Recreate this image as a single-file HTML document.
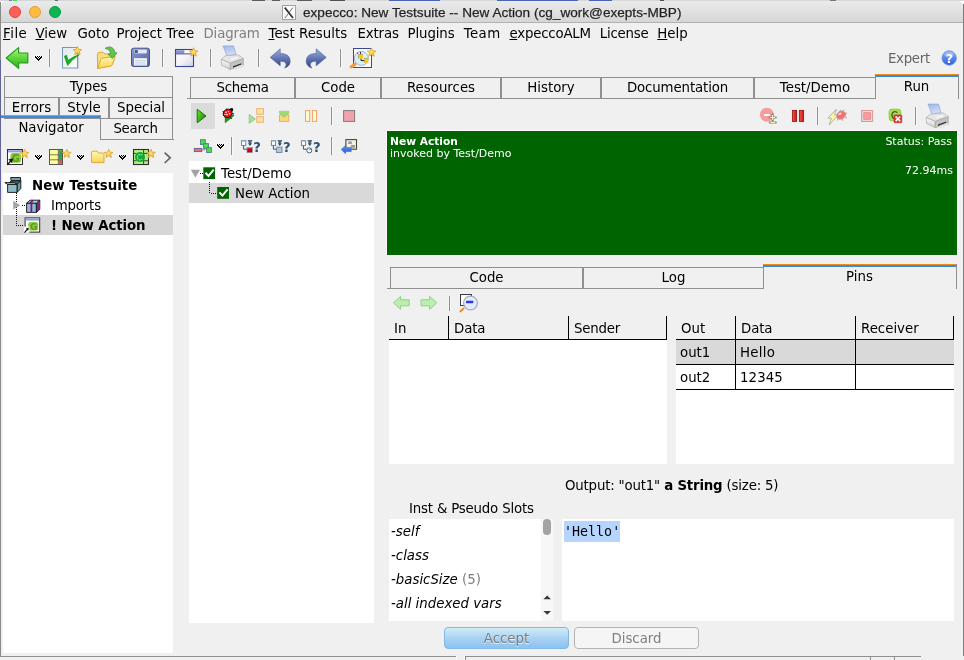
<!DOCTYPE html>
<html><head><meta charset="utf-8"><title>expecco</title>
<style>
*{box-sizing:border-box;margin:0;padding:0}
html,body{width:964px;height:660px;overflow:hidden;background:#fff}
body{font-family:"DejaVu Sans","Liberation Sans",sans-serif;font-size:13.33px;color:#000;position:relative}

#bgwin{position:absolute;left:1px;top:1px;width:962px;height:655px;background:#f0f0f0;border-radius:5px 5px 0 0}
#title{position:absolute;left:1px;top:1px;width:962px;height:22px;background:linear-gradient(#ebebeb,#d6d6d6);border-bottom:1px solid #b1b1b1;border-radius:5px 5px 0 0}
.tl{position:absolute;top:5px;width:12px;height:12px;border-radius:50%}
.mi{letter-spacing:0;position:absolute;top:25px;height:18px;line-height:18px;white-space:pre}
.mi u{text-decoration:underline;text-underline-offset:0.5px;text-decoration-thickness:1px}
.tab{position:absolute;border:1px solid #8f8f8f;background:#f0f0f0;text-align:center;white-space:pre;overflow:hidden}
.tab.sel{border:none;border-right:1px solid #8f8f8f;background:transparent}
.tab.sel:before{content:"";position:absolute;left:0;right:-1px;top:0;height:3px;background:linear-gradient(#f28a22 0,#f28a22 1px,#3a8ae0 1px,#3a8ae0 3px)}
.hl{position:absolute;height:1px;background:#9a9a9a}
.vl{position:absolute;width:1px;background:#8e8e8e;box-shadow:1px 0 0 #f9f9f9,-1px 0 0 #f5f5f5}
.bl{position:absolute;background:#000}
.white{position:absolute;background:#fff}
.t{position:absolute;white-space:pre;line-height:16px;height:16px}
.ic{position:absolute;overflow:visible}
#root{position:absolute;left:0;top:0;width:964px;height:660px;will-change:transform;overflow:hidden}
</style></head><body>
<div id="root">
<!-- desktop fragments -->
<div style="position:absolute;left:0px;top:0px;width:964px;height:1px;background:#d3d7da;"></div>
<div style="position:absolute;left:9px;top:0px;width:3px;height:1px;background:#5a5ab0;opacity:.75"></div>
<div style="position:absolute;left:13px;top:0px;width:4px;height:1px;background:#22dd22;opacity:.75"></div>
<div style="position:absolute;left:55px;top:0px;width:3px;height:1px;background:#444;opacity:.75"></div>
<div style="position:absolute;left:252px;top:0px;width:13px;height:1px;background:#333;opacity:.75"></div>
<div style="position:absolute;left:272px;top:0px;width:8px;height:1px;background:#333;opacity:.75"></div>
<div style="position:absolute;left:297px;top:0px;width:15px;height:1px;background:#333;opacity:.75"></div>
<div style="position:absolute;left:330px;top:0px;width:15px;height:1px;background:#222;opacity:.75"></div>
<div style="position:absolute;left:389px;top:0px;width:51px;height:1px;background:#1c3fa5;opacity:.75"></div>
<div style="position:absolute;left:497px;top:0px;width:81px;height:1px;background:#1c3fa5;opacity:.75"></div>
<div style="position:absolute;left:589px;top:0px;width:23px;height:1px;background:#1c3fa5;opacity:.75"></div>
<div style="position:absolute;left:660px;top:0px;width:4px;height:1px;background:#222;opacity:.75"></div>
<div style="position:absolute;left:830px;top:0px;width:6px;height:1px;background:#555;opacity:.75"></div>
<div style="position:absolute;left:0px;top:2px;width:1px;height:658px;background:#8a8a8a;"></div>
<div style="position:absolute;left:963px;top:4px;width:1px;height:653px;background:#7c7c7c;"></div>
<div style="position:absolute;left:0px;top:60px;width:1px;height:140px;background:#3a3ab0;opacity:.5"></div>
<div style="position:absolute;left:0px;top:656px;width:964px;height:4px;background:#f0f0f0;"></div>
<div style="position:absolute;left:0px;top:656px;width:456px;height:1px;background:#8f8f8f;"></div>
<div style="position:absolute;left:456px;top:656px;width:1px;height:4px;background:#fafafa;"></div>
<div style="position:absolute;left:464px;top:656px;width:1px;height:4px;background:#fafafa;"></div>
<div style="position:absolute;left:465px;top:656px;width:456px;height:1px;background:#8f8f8f;"></div>
<div style="position:absolute;left:465px;top:656px;width:1px;height:4px;background:#8f8f8f;"></div>
<div style="position:absolute;left:870px;top:656px;width:1px;height:4px;background:#8f8f8f;"></div>
<div style="position:absolute;left:894px;top:656px;width:1px;height:4px;background:#8f8f8f;"></div>
<div id="bgwin"></div>
<div id="title">
 <div class="tl" style="left:8px;background:#fc5f57;border:0.5px solid #e0443e"></div>
 <div class="tl" style="left:28px;background:#fdbc40;border:0.5px solid #dea034"></div>
 <div class="tl" style="left:48px;background:#0bb552;border:0.5px solid #0a9d44"></div>
</div>
<svg class="ic" style="left:282px;top:5px" width="15" height="15" viewBox="0 0 15 15"><rect x="0.5" y="0.5" width="13" height="14" fill="#fbfbfb" stroke="#a2a2a2"/><path d="M2.8 2.6L11 13" stroke="#333" stroke-width="1.7"/><path d="M10.8 2.6L3 13" stroke="#444" stroke-width="0.8"/></svg>
<div class="t" style="left:303px;top:5px;font-family:'Liberation Sans',sans-serif;font-size:13.6px;letter-spacing:0;color:#1e1e1e;-webkit-text-stroke:0.25px #2a2a2a">expecco: New Testsuite -- New Action (cg_work@exepts-MBP)</div>
<!-- menu -->
<span class="mi" style="left:3px;letter-spacing:0.5px"><u>F</u>ile</span>
<span class="mi" style="left:35.5px;"><u>V</u>iew</span>
<span class="mi" style="left:77.5px;">Goto</span>
<span class="mi" style="left:116.5px;">Project Tree</span>
<span class="mi" style="left:203.5px;color:#7f7f7f;letter-spacing:-0.15px">Diagram</span>
<span class="mi" style="left:268.5px;"><u>T</u>est Results</span>
<span class="mi" style="left:357.5px;letter-spacing:-0.15px">Extras</span>
<span class="mi" style="left:407.5px;letter-spacing:-0.1px">Plugins</span>
<span class="mi" style="left:463.7px;letter-spacing:0.4px">Team</span>
<span class="mi" style="left:509.5px;letter-spacing:-0.2px"><u>e</u>xpeccoALM</span>
<span class="mi" style="left:599.7px;letter-spacing:-0.22px">License</span>
<span class="mi" style="left:657.3px;"><u>H</u>elp</span>
<!--TOOLBAR-->
<div class="vl" style="left:49px;top:49px;height:18px"></div>
<div class="vl" style="left:162px;top:49px;height:18px"></div>
<div class="vl" style="left:210px;top:49px;height:18px"></div>
<div class="vl" style="left:258px;top:49px;height:18px"></div>
<div class="vl" style="left:340px;top:49px;height:18px"></div>
<div class="t" style="left:888px;top:51px;color:#666;letter-spacing:-0.3px">Expert</div>
<!-- left tabs -->
<div class="tab" style="left:4px;top:76px;width:169px;height:22px;line-height:20px;">Types</div>
<div class="tab" style="left:4px;top:97px;width:55px;height:22px;line-height:20px;">Errors</div>
<div class="tab" style="left:59px;top:97px;width:50px;height:22px;line-height:20px;">Style</div>
<div class="tab" style="left:109px;top:97px;width:64px;height:22px;line-height:20px;">Special</div>
<div class="tab" style="left:100px;top:118px;width:73px;height:22px;line-height:19px;padding-right:2px;letter-spacing:-0.26px">Search</div>
<div class="hl" style="left:172px;top:139px;width:2px;background:#8f8f8f"></div>
<div class="tab sel" style="left:1px;top:115px;width:100px;height:25px;line-height:26px;padding-left:1px">Navigator</div>
<div class="white" style="left:3px;top:173px;width:170px;height:480px"></div>
<div style="position:absolute;left:3px;top:215px;width:170px;height:20px;background:#d6d6d6;"></div>
<div class="t" style="left:32px;top:178px;font-weight:bold;letter-spacing:0">New Testsuite</div>
<div class="t" style="left:51px;top:198px;letter-spacing:-0.18px">Imports</div>
<div class="t" style="left:51px;top:218px;font-weight:bold;letter-spacing:-0.1px">! New Action</div>
<!-- main tabs -->
<div class="hl" style="left:187px;top:98px;width:4px;background:#8f8f8f"></div>
<div class="tab" style="left:190px;top:77px;width:105px;height:22px;line-height:20px;letter-spacing:-0.24px">Schema</div>
<div class="tab" style="left:295px;top:77px;width:86px;height:22px;line-height:20px;letter-spacing:0px">Code</div>
<div class="tab" style="left:381px;top:77px;width:120px;height:22px;line-height:20px;letter-spacing:0px">Resources</div>
<div class="tab" style="left:501px;top:77px;width:100px;height:22px;line-height:20px;letter-spacing:0px">History</div>
<div class="tab" style="left:601px;top:77px;width:153px;height:22px;line-height:20px;letter-spacing:-0.12px">Documentation</div>
<div class="tab" style="left:754px;top:77px;width:122px;height:22px;line-height:20px;letter-spacing:0px">Test/Demo</div>
<div class="tab sel" style="left:875px;top:74px;width:84px;height:25px;line-height:26px;">Run</div>
<div style="position:absolute;left:191px;top:103px;width:24px;height:26px;background:#dbdbdb;"></div>
<div class="vl" style="left:331px;top:107px;height:18px"></div>
<div class="vl" style="left:817px;top:107px;height:18px"></div>
<div class="vl" style="left:915px;top:107px;height:18px"></div>
<div class="vl" style="left:231px;top:137px;height:18px"></div>
<div class="vl" style="left:331px;top:137px;height:18px"></div>
<div class="white" style="left:189px;top:161px;width:185px;height:462px"></div>
<div style="position:absolute;left:189px;top:183px;width:185px;height:20px;background:#d9d9d9;"></div>
<div class="t" style="left:221px;top:166px;">Test/Demo</div>
<div class="t" style="left:235px;top:186px;">New Action</div>
<div style="position:absolute;left:386px;top:130px;width:572px;height:126px;background:#fdfafd;"></div>
<div style="position:absolute;left:387px;top:131px;width:570px;height:124px;background:#006400;"></div>
<div class="t" style="left:390px;top:135px;color:#fff;font-weight:bold;font-size:10.67px;line-height:13px;letter-spacing:0">New Action</div>
<div class="t" style="left:390px;top:147px;color:#fff;font-size:11px;line-height:13px;letter-spacing:0">invoked by Test/Demo</div>
<div class="t" style="right:12px;left:auto;top:135px;color:#fff;font-size:11px;line-height:13px;letter-spacing:0">Status: Pass</div>
<div class="t" style="right:11px;left:auto;top:164px;color:#fff;font-size:11px;line-height:13px;letter-spacing:0">72.94ms</div>
<div class="hl" style="left:387px;top:288px;width:4px;background:#8f8f8f"></div>
<div class="tab" style="left:390px;top:267px;width:193px;height:22px;line-height:20px;">Code</div>
<div class="tab" style="left:583px;top:267px;width:181px;height:22px;line-height:20px;">Log</div>
<div class="tab sel" style="left:763px;top:264px;width:194px;height:25px;line-height:26px;">Pins</div>
<div class="vl" style="left:449px;top:296px;height:15px"></div>
<div style="position:absolute;left:389px;top:340px;width:278px;height:124px;background:#fff;"></div>
<div style="position:absolute;left:389px;top:339px;width:278px;height:1px;background:#000;"></div>
<div style="position:absolute;left:448px;top:316px;width:1px;height:24px;background:#000;"></div>
<div style="position:absolute;left:568px;top:316px;width:1px;height:24px;background:#000;"></div>
<div style="position:absolute;left:666px;top:316px;width:1px;height:24px;background:#000;"></div>
<div class="t" style="left:394px;top:321px;">In</div>
<div class="t" style="left:454px;top:321px;letter-spacing:-0.13px">Data</div>
<div class="t" style="left:574px;top:321px;letter-spacing:-0.18px">Sender</div>
<div style="position:absolute;left:676px;top:340px;width:278px;height:124px;background:#fff;"></div>
<div style="position:absolute;left:676px;top:340px;width:278px;height:24px;background:#d9d9d9;"></div>
<div style="position:absolute;left:676px;top:339px;width:278px;height:1px;background:#000;"></div>
<div style="position:absolute;left:676px;top:364px;width:278px;height:1px;background:#000;"></div>
<div style="position:absolute;left:676px;top:389px;width:278px;height:1px;background:#000;"></div>
<div style="position:absolute;left:735px;top:316px;width:1px;height:74px;background:#000;"></div>
<div style="position:absolute;left:855px;top:316px;width:1px;height:74px;background:#000;"></div>
<div style="position:absolute;left:953px;top:316px;width:1px;height:24px;background:#000;"></div>
<div class="t" style="left:681px;top:321px;">Out</div>
<div class="t" style="left:741px;top:321px;letter-spacing:-0.13px">Data</div>
<div class="t" style="left:861px;top:321px;">Receiver</div>
<div class="t" style="left:680px;top:345px;">out1</div>
<div class="t" style="left:740px;top:345px;letter-spacing:0.3px">Hello</div>
<div class="t" style="left:680px;top:370px;">out2</div>
<div class="t" style="left:740px;top:370px;letter-spacing:0.1px">12345</div>
<div class="t" style="left:565px;top:478px;letter-spacing:-0.18px">Output: "out1" <b>a String</b> (size: 5)</div>
<div class="t" style="left:409px;top:501px;letter-spacing:-0.18px">Inst &amp; Pseudo Slots</div>
<div style="position:absolute;left:389px;top:519px;width:164px;height:102px;background:#fff;"></div>
<div style="position:absolute;left:541px;top:519px;width:12px;height:102px;background:#f7f7f7;"></div>
<div style="position:absolute;left:543px;top:519px;width:8px;height:16px;background:#a3a3a3;border-radius:4px"></div>
<div class="t" style="left:391px;top:524px;font-style:italic">-self</div>
<div class="t" style="left:391px;top:548px;font-style:italic">-class</div>
<div class="t" style="left:391px;top:572px;font-style:italic">-basicSize <span style="font-style:normal;color:#808080">(5)</span></div>
<div class="t" style="left:391px;top:596px;font-style:italic">-all indexed vars</div>
<svg class="ic" style="left:0;top:0" width="964" height="660" viewBox="0 0 964 660"><path d="M543.4 599.2L547.2 595.4L551 599.2z" fill="#3a3a3a"/><path d="M543.4 610.9L547.2 614.7L551 610.9z" fill="#3a3a3a"/></svg>
<div style="position:absolute;left:562px;top:519px;width:392px;height:102px;background:#fff;"></div>
<div style="position:absolute;left:564px;top:521px;width:56px;height:21px;background:#b5d5ff;"></div>
<div class="t" style="left:564px;top:524px;font-family:'DejaVu Sans Mono',monospace;letter-spacing:0">'Hello'</div>
<div style="position:absolute;left:444px;top:627px;width:125px;height:22px;border:1px solid #84b8e4;border-radius:4px;background:linear-gradient(#d2ecf6,#a9d3f3 50%,#8bc2ef);text-align:center;line-height:21px;color:#7d7d7d;text-shadow:0 1px 0 #e8f3fc">Accept</div>
<div style="position:absolute;left:574px;top:627px;width:125px;height:22px;border:1px solid #b3b3b3;border-radius:4px;background:#f5f5f5;text-align:center;line-height:21px;color:#808080">Discard</div>
<!--ICONS-->
<svg class="ic" style="left:0;top:0" width="964" height="660" viewBox="0 0 964 660">
<defs>
<linearGradient id="gStar" x1="0" y1="0" x2="0.6" y2="1"><stop offset="0" stop-color="#fff6b8"/><stop offset="1" stop-color="#f3c334"/></linearGradient>
<linearGradient id="gArrowG" x1="0" y1="0" x2="0" y2="1"><stop offset="0" stop-color="#b4f58c"/><stop offset="0.5" stop-color="#5fd63a"/><stop offset="1" stop-color="#2fae1c"/></linearGradient>
<linearGradient id="gPlay" x1="0" y1="0.1" x2="1" y2="0.8"><stop offset="0" stop-color="#5cf210"/><stop offset="0.5" stop-color="#3fae1c"/><stop offset="1" stop-color="#2a7e1c"/></linearGradient>
<linearGradient id="gBlueArr" x1="0" y1="0" x2="0" y2="1"><stop offset="0" stop-color="#9fb0dc"/><stop offset="0.55" stop-color="#5c70ae"/><stop offset="1" stop-color="#2f3f7e"/></linearGradient>
<linearGradient id="gFolder" x1="0" y1="0" x2="0" y2="1"><stop offset="0" stop-color="#fff6b4"/><stop offset="1" stop-color="#f9d654"/></linearGradient>
<linearGradient id="gFloppy" x1="0" y1="0" x2="1" y2="1"><stop offset="0" stop-color="#8d9cd0"/><stop offset="1" stop-color="#51639f"/></linearGradient>
<linearGradient id="gPage" x1="0" y1="0" x2="1" y2="1"><stop offset="0" stop-color="#dfe6f0"/><stop offset="1" stop-color="#fdfdfd"/></linearGradient>
<linearGradient id="gWinB" x1="0" y1="0" x2="1" y2="1"><stop offset="0" stop-color="#fffdfd"/><stop offset="0.5" stop-color="#f8f3f5"/><stop offset="1" stop-color="#cfd0e4"/></linearGradient>
<linearGradient id="gPaper" x1="0" y1="0" x2="0.3" y2="1"><stop offset="0" stop-color="#9db6ea"/><stop offset="1" stop-color="#d4def4"/></linearGradient>
<linearGradient id="gPrnL" x1="0" y1="0" x2="0" y2="1"><stop offset="0" stop-color="#fafafa"/><stop offset="1" stop-color="#cfcfcf"/></linearGradient>
<linearGradient id="gHelp" x1="0" y1="0" x2="0" y2="1"><stop offset="0" stop-color="#7fa8f8"/><stop offset="1" stop-color="#2f62d8"/></linearGradient>
<linearGradient id="gRedBar" x1="0" y1="0" x2="1" y2="0"><stop offset="0" stop-color="#f05a4a"/><stop offset="1" stop-color="#c41414"/></linearGradient>
<linearGradient id="gBlueL" x1="0" y1="0" x2="0" y2="1"><stop offset="0" stop-color="#6aa0f4"/><stop offset="1" stop-color="#1c50c8"/></linearGradient>
</defs>
<!-- back arrow -->
<path d="M6.2 58L18.6 47.6L18.6 53L27.8 53L27.8 62.8L18.6 62.8L18.6 68.4z" fill="url(#gArrowG)" stroke="#1ea01a" stroke-width="1.2" stroke-linejoin="round"/>
<g shape-rendering="crispEdges"><rect x="35" y="55" width="1" height="1" fill="#fff" opacity="0.8"/><rect x="37" y="55" width="1" height="1" fill="#fff" opacity="0.8"/><rect x="39" y="55" width="1" height="1" fill="#fff" opacity="0.8"/><rect x="41" y="55" width="1" height="1" fill="#fff" opacity="0.8"/><rect x="34" y="56" width="1" height="1" fill="#fff" opacity="0.8"/><rect x="42" y="56" width="1" height="1" fill="#fff" opacity="0.8"/><rect x="34" y="57" width="1" height="1" fill="#fff" opacity="0.8"/><rect x="42" y="57" width="1" height="1" fill="#fff" opacity="0.8"/><rect x="35" y="58" width="1" height="1" fill="#fff" opacity="0.8"/><rect x="41" y="58" width="1" height="1" fill="#fff" opacity="0.8"/><rect x="36" y="59" width="1" height="1" fill="#fff" opacity="0.8"/><rect x="40" y="59" width="1" height="1" fill="#fff" opacity="0.8"/><rect x="37" y="60" width="1" height="1" fill="#fff" opacity="0.8"/><rect x="39" y="60" width="1" height="1" fill="#fff" opacity="0.8"/><rect x="38" y="61" width="1" height="1" fill="#fff" opacity="0.8"/><rect x="35" y="56" width="1" height="1" fill="#000"/><rect x="37" y="56" width="1" height="1" fill="#000"/><rect x="39" y="56" width="1" height="1" fill="#000"/><rect x="41" y="56" width="1" height="1" fill="#000"/><rect x="35" y="57" width="1" height="1" fill="#000"/><rect x="36" y="57" width="1" height="1" fill="#000"/><rect x="38" y="57" width="1" height="1" fill="#000"/><rect x="40" y="57" width="1" height="1" fill="#000"/><rect x="41" y="57" width="1" height="1" fill="#000"/><rect x="36" y="58" width="1" height="1" fill="#000"/><rect x="37" y="58" width="1" height="1" fill="#000"/><rect x="39" y="58" width="1" height="1" fill="#000"/><rect x="40" y="58" width="1" height="1" fill="#000"/><rect x="37" y="59" width="1" height="1" fill="#000"/><rect x="38" y="59" width="1" height="1" fill="#000"/><rect x="39" y="59" width="1" height="1" fill="#000"/><rect x="38" y="60" width="1" height="1" fill="#000"/></g>
<!-- check doc -->
<rect x="62.5" y="47.5" width="15" height="20.5" fill="url(#gPage)" stroke="#7a98b6" stroke-width="1"/>
<path d="M63.4 68.6h15.2v-19" fill="none" stroke="#b9c6d4" stroke-width="0.8"/>
<path d="M64.4 56.2L66.6 55.2L68 60.6Q72 57 79.4 54.6Q72 59.4 67.6 65.4z" fill="#18b01c" stroke="#0d9a12" stroke-width="0.7" stroke-linejoin="round"/>
<polygon points="77.40,46.40 78.58,49.38 81.77,49.58 79.30,51.62 80.10,54.72 77.40,53.00 74.70,54.72 75.50,51.62 73.03,49.58 76.22,49.38" fill="url(#gStar)" stroke="#dca92c" stroke-width="0.9" stroke-linejoin="round"/>
<!-- folder open -->
<path d="M97.6 68.4L97.4 54.4Q97.4 52.6 99 52.4L103.4 52.2L105 54L112.6 54Q113.8 54 113.8 55.2L113.8 57L115 57L112.4 64.6Q111.8 65.8 110.4 66z" fill="#f7dc80" stroke="#dfa428" stroke-width="0.9" stroke-linejoin="round"/>
<path d="M97.8 68.4L100.6 59.6Q101 58.4 102.2 58.2L115.2 56.4L112.2 64.8Q111.8 65.8 110.4 66z" fill="url(#gFolder)" stroke="#dfa428" stroke-width="0.9" stroke-linejoin="round"/>
<path d="M105 48.3Q110.6 45.4 113.4 48.8Q114.6 50.4 114.7 52.7L117 52.9L112.3 58.5L107.9 54L110.6 53.5Q110.4 51.6 109.2 50.4Q107.6 48.9 105 48.3z" fill="#62c44c" stroke="#3f9c34" stroke-width="0.8" stroke-linejoin="round"/>
<!-- floppy -->
<rect x="131.5" y="48.2" width="18" height="18.3" rx="2" fill="url(#gFloppy)" stroke="#46568e" stroke-width="1"/>
<rect x="134.6" y="49.6" width="12.2" height="3.8" fill="#e4e8f4"/>
<rect x="135" y="50" width="2.8" height="3" fill="#4a5a94"/>
<rect x="134" y="58.2" width="13" height="7.4" fill="#f7f8fc"/>
<path d="M135 60.4h11M135 62.2h11M135 64h11" stroke="#bcc4de" stroke-width="0.8"/>
<!-- new window -->
<rect x="175.5" y="49.5" width="18" height="17" fill="url(#gWinB)" stroke="#36469a" stroke-width="1.1"/>
<rect x="175.9" y="50.2" width="8.4" height="3.4" fill="#8696c8"/>
<path d="M175.4 53.9h18.2" stroke="#36469a" stroke-width="0.9"/>
<polygon points="193.60,47.80 194.78,50.78 197.97,50.98 195.50,53.02 196.30,56.12 193.60,54.40 190.90,56.12 191.70,53.02 189.23,50.98 192.42,50.78" fill="url(#gStar)" stroke="#dca92c" stroke-width="0.9" stroke-linejoin="round"/>
<g transform="translate(221,46)"><path d="M2 -0.1L12.6 -0.1L15 8.6L6 9.7z" fill="url(#gPaper)" stroke="#90a6dc" stroke-width="0.7" stroke-linejoin="round"/><path d="M0.2 13.4L4.2 9.8L17.4 8.8L22.3 12.5L9.4 17.2z" fill="#e6e6e6" stroke="#a4a4a4" stroke-width="0.6" stroke-linejoin="round"/><path d="M7.6 12.6L16.4 10.4L19.4 12L10.4 14.8z" fill="#f6f6f6" stroke="#cfcfcf" stroke-width="0.4"/><path d="M0.2 13.4L9.4 17.2L9.2 23.5L0.6 19.2z" fill="url(#gPrnL)" stroke="#9a9a9a" stroke-width="0.6" stroke-linejoin="round"/><path d="M9.4 17.2L22.3 12.5L22.4 19L9.2 23.5z" fill="#c4c4c4" stroke="#9a9a9a" stroke-width="0.6" stroke-linejoin="round"/><path d="M12 20.2L20.4 17.2L20.4 18.6L12 21.8z" fill="#2e2e2e"/><path d="M12.6 22L21 18.8L23 19.8L14.4 23.4z" fill="#ececec" stroke="#b4b4b4" stroke-width="0.3"/></g>
<!-- undo / redo -->
<path d="M270.2 57.4L280.2 48.8L280.2 53.4Q290.4 53.6 290.2 61.4Q290 66.2 284.6 68Q287.2 65 285.6 62.8Q284 60.8 280.2 61.2L280.2 65.8z" fill="url(#gBlueArr)" stroke="#4a5c9e" stroke-width="0.6" stroke-linejoin="round"/>
<g transform="translate(596.4,0) scale(-1,1)"><path d="M270.2 57.4L280.2 48.8L280.2 53.4Q290.4 53.6 290.2 61.4Q290 66.2 284.6 68Q287.2 65 285.6 62.8Q284 60.8 280.2 61.2L280.2 65.8z" fill="url(#gBlueArr)" stroke="#4a5c9e" stroke-width="0.6" stroke-linejoin="round"/></g>
<!-- magnifier -->
<rect x="353.5" y="48.5" width="18" height="19" fill="#fcf9fb" stroke="#3a4a92" stroke-width="1"/>
<path d="M355.2 64.2L351 67" stroke="#f59a3c" stroke-width="3" stroke-linecap="round"/>
<circle cx="361.4" cy="58.4" r="7" fill="#d6f1fc" stroke="#a6acd8" stroke-width="1"/>
<path d="M361 58.4v2.2h3.4" fill="none" stroke="#222" stroke-width="1"/>
<path d="M360.5 52v2.4" stroke="#222" stroke-width="0.9"/><rect x="357" y="52.6" width="1" height="1" fill="#222"/>
<rect x="358.4" y="54.4" width="4.5" height="4.2" fill="#ffc800"/><path d="M358.4 58.6v-4.2h4.5" fill="none" stroke="#8a8a7a" stroke-width="0.6"/>
<rect x="364.3" y="58.4" width="4" height="4.4" fill="#ffc800"/><path d="M364.3 62.8v-4.4h4" fill="none" stroke="#8a8a7a" stroke-width="0.6"/>
<polygon points="371.50,47.90 372.68,50.88 375.87,51.08 373.40,53.12 374.20,56.22 371.50,54.50 368.80,56.22 369.60,53.12 367.13,51.08 370.32,50.88" fill="url(#gStar)" stroke="#dca92c" stroke-width="0.9" stroke-linejoin="round"/>
<!-- help -->
<circle cx="949.2" cy="58" r="7.2" fill="url(#gHelp)" stroke="#5a86e6" stroke-width="0.7"/>
<ellipse cx="949.2" cy="54.6" rx="5" ry="3" fill="#fff" opacity="0.28"/>
<text x="949.3" y="62.6" text-anchor="middle" font-family="DejaVu Sans, sans-serif" font-weight="bold" font-size="12.5" fill="#fff">?</text>
<!-- left toolbar -->
<rect x="7.5" y="149.5" width="15" height="15" fill="#fff" stroke="#2e2e2e" stroke-width="1"/>
<rect x="8" y="150.2" width="14" height="2.2" fill="#8ea4d6"/>
<rect x="10.4" y="153" width="10.6" height="9.8" rx="2.4" fill="#8fca3c"/>
<text x="15.8" y="161.6" text-anchor="middle" font-family="DejaVu Sans, sans-serif" font-weight="bold" font-size="9.6" fill="#5c9a1e">G</text>
<path d="M7.2 164.8L11.6 160.2" stroke="#111" stroke-width="1.3"/><path d="M12.6 158.8L8.8 159.6L11.8 162.6z" fill="#111" stroke="#111" stroke-width="0.6"/>
<polygon points="24.60,149.20 25.78,152.18 28.97,152.38 26.50,154.42 27.30,157.52 24.60,155.80 21.90,157.52 22.70,154.42 20.23,152.38 23.42,152.18" fill="url(#gStar)" stroke="#dca92c" stroke-width="0.9" stroke-linejoin="round"/>
<g shape-rendering="crispEdges"><rect x="35" y="154" width="1" height="1" fill="#fff" opacity="0.8"/><rect x="37" y="154" width="1" height="1" fill="#fff" opacity="0.8"/><rect x="39" y="154" width="1" height="1" fill="#fff" opacity="0.8"/><rect x="41" y="154" width="1" height="1" fill="#fff" opacity="0.8"/><rect x="34" y="155" width="1" height="1" fill="#fff" opacity="0.8"/><rect x="42" y="155" width="1" height="1" fill="#fff" opacity="0.8"/><rect x="34" y="156" width="1" height="1" fill="#fff" opacity="0.8"/><rect x="42" y="156" width="1" height="1" fill="#fff" opacity="0.8"/><rect x="35" y="157" width="1" height="1" fill="#fff" opacity="0.8"/><rect x="41" y="157" width="1" height="1" fill="#fff" opacity="0.8"/><rect x="36" y="158" width="1" height="1" fill="#fff" opacity="0.8"/><rect x="40" y="158" width="1" height="1" fill="#fff" opacity="0.8"/><rect x="37" y="159" width="1" height="1" fill="#fff" opacity="0.8"/><rect x="39" y="159" width="1" height="1" fill="#fff" opacity="0.8"/><rect x="38" y="160" width="1" height="1" fill="#fff" opacity="0.8"/><rect x="35" y="155" width="1" height="1" fill="#000"/><rect x="37" y="155" width="1" height="1" fill="#000"/><rect x="39" y="155" width="1" height="1" fill="#000"/><rect x="41" y="155" width="1" height="1" fill="#000"/><rect x="35" y="156" width="1" height="1" fill="#000"/><rect x="36" y="156" width="1" height="1" fill="#000"/><rect x="38" y="156" width="1" height="1" fill="#000"/><rect x="40" y="156" width="1" height="1" fill="#000"/><rect x="41" y="156" width="1" height="1" fill="#000"/><rect x="36" y="157" width="1" height="1" fill="#000"/><rect x="37" y="157" width="1" height="1" fill="#000"/><rect x="39" y="157" width="1" height="1" fill="#000"/><rect x="40" y="157" width="1" height="1" fill="#000"/><rect x="37" y="158" width="1" height="1" fill="#000"/><rect x="38" y="158" width="1" height="1" fill="#000"/><rect x="39" y="158" width="1" height="1" fill="#000"/><rect x="38" y="159" width="1" height="1" fill="#000"/></g>
<rect x="49.5" y="149.5" width="13" height="15" fill="#ffff99" stroke="#555" stroke-width="1"/>
<rect x="58.6" y="150.2" width="3.4" height="4.4" fill="#1cb04a"/><rect x="58.6" y="155" width="3.4" height="4.6" fill="#1cb04a"/><rect x="58.6" y="160" width="3.4" height="4.2" fill="#f25252"/>
<path d="M49.5 154.8h13M49.5 159.8h13M58.3 149.7v15" stroke="#555" stroke-width="0.8"/>
<polygon points="66.80,149.20 67.98,152.18 71.17,152.38 68.70,154.42 69.50,157.52 66.80,155.80 64.10,157.52 64.90,154.42 62.43,152.38 65.62,152.18" fill="url(#gStar)" stroke="#dca92c" stroke-width="0.9" stroke-linejoin="round"/>
<g shape-rendering="crispEdges"><rect x="77" y="154" width="1" height="1" fill="#fff" opacity="0.8"/><rect x="79" y="154" width="1" height="1" fill="#fff" opacity="0.8"/><rect x="81" y="154" width="1" height="1" fill="#fff" opacity="0.8"/><rect x="83" y="154" width="1" height="1" fill="#fff" opacity="0.8"/><rect x="76" y="155" width="1" height="1" fill="#fff" opacity="0.8"/><rect x="84" y="155" width="1" height="1" fill="#fff" opacity="0.8"/><rect x="76" y="156" width="1" height="1" fill="#fff" opacity="0.8"/><rect x="84" y="156" width="1" height="1" fill="#fff" opacity="0.8"/><rect x="77" y="157" width="1" height="1" fill="#fff" opacity="0.8"/><rect x="83" y="157" width="1" height="1" fill="#fff" opacity="0.8"/><rect x="78" y="158" width="1" height="1" fill="#fff" opacity="0.8"/><rect x="82" y="158" width="1" height="1" fill="#fff" opacity="0.8"/><rect x="79" y="159" width="1" height="1" fill="#fff" opacity="0.8"/><rect x="81" y="159" width="1" height="1" fill="#fff" opacity="0.8"/><rect x="80" y="160" width="1" height="1" fill="#fff" opacity="0.8"/><rect x="77" y="155" width="1" height="1" fill="#000"/><rect x="79" y="155" width="1" height="1" fill="#000"/><rect x="81" y="155" width="1" height="1" fill="#000"/><rect x="83" y="155" width="1" height="1" fill="#000"/><rect x="77" y="156" width="1" height="1" fill="#000"/><rect x="78" y="156" width="1" height="1" fill="#000"/><rect x="80" y="156" width="1" height="1" fill="#000"/><rect x="82" y="156" width="1" height="1" fill="#000"/><rect x="83" y="156" width="1" height="1" fill="#000"/><rect x="78" y="157" width="1" height="1" fill="#000"/><rect x="79" y="157" width="1" height="1" fill="#000"/><rect x="81" y="157" width="1" height="1" fill="#000"/><rect x="82" y="157" width="1" height="1" fill="#000"/><rect x="79" y="158" width="1" height="1" fill="#000"/><rect x="80" y="158" width="1" height="1" fill="#000"/><rect x="81" y="158" width="1" height="1" fill="#000"/><rect x="80" y="159" width="1" height="1" fill="#000"/></g>
<path d="M91.5 162.6L91.5 152.2Q91.5 151.2 92.6 151.2L97.2 151.2L98.4 153L103.2 153Q104 153 104 154L104 162.6z" fill="url(#gFolder)" stroke="#dca032" stroke-width="0.9" stroke-linejoin="round"/>
<polygon points="108.70,149.20 109.88,152.18 113.07,152.38 110.60,154.42 111.40,157.52 108.70,155.80 106.00,157.52 106.80,154.42 104.33,152.38 107.52,152.18" fill="url(#gStar)" stroke="#dca92c" stroke-width="0.9" stroke-linejoin="round"/>
<g shape-rendering="crispEdges"><rect x="119" y="154" width="1" height="1" fill="#fff" opacity="0.8"/><rect x="121" y="154" width="1" height="1" fill="#fff" opacity="0.8"/><rect x="123" y="154" width="1" height="1" fill="#fff" opacity="0.8"/><rect x="125" y="154" width="1" height="1" fill="#fff" opacity="0.8"/><rect x="118" y="155" width="1" height="1" fill="#fff" opacity="0.8"/><rect x="126" y="155" width="1" height="1" fill="#fff" opacity="0.8"/><rect x="118" y="156" width="1" height="1" fill="#fff" opacity="0.8"/><rect x="126" y="156" width="1" height="1" fill="#fff" opacity="0.8"/><rect x="119" y="157" width="1" height="1" fill="#fff" opacity="0.8"/><rect x="125" y="157" width="1" height="1" fill="#fff" opacity="0.8"/><rect x="120" y="158" width="1" height="1" fill="#fff" opacity="0.8"/><rect x="124" y="158" width="1" height="1" fill="#fff" opacity="0.8"/><rect x="121" y="159" width="1" height="1" fill="#fff" opacity="0.8"/><rect x="123" y="159" width="1" height="1" fill="#fff" opacity="0.8"/><rect x="122" y="160" width="1" height="1" fill="#fff" opacity="0.8"/><rect x="119" y="155" width="1" height="1" fill="#000"/><rect x="121" y="155" width="1" height="1" fill="#000"/><rect x="123" y="155" width="1" height="1" fill="#000"/><rect x="125" y="155" width="1" height="1" fill="#000"/><rect x="119" y="156" width="1" height="1" fill="#000"/><rect x="120" y="156" width="1" height="1" fill="#000"/><rect x="122" y="156" width="1" height="1" fill="#000"/><rect x="124" y="156" width="1" height="1" fill="#000"/><rect x="125" y="156" width="1" height="1" fill="#000"/><rect x="120" y="157" width="1" height="1" fill="#000"/><rect x="121" y="157" width="1" height="1" fill="#000"/><rect x="123" y="157" width="1" height="1" fill="#000"/><rect x="124" y="157" width="1" height="1" fill="#000"/><rect x="121" y="158" width="1" height="1" fill="#000"/><rect x="122" y="158" width="1" height="1" fill="#000"/><rect x="123" y="158" width="1" height="1" fill="#000"/><rect x="122" y="159" width="1" height="1" fill="#000"/></g>
<rect x="133.5" y="149.5" width="15" height="15" fill="#b4f284" stroke="#2e2e2e" stroke-width="1.1"/>
<path d="M143.6 149.6v15M133.5 153.4h3M133.5 160.8h3M143.6 153.4h5M143.6 160.8h5" stroke="#2e2e2e" stroke-width="0.9"/>
<circle cx="140" cy="157.1" r="5" fill="#12a838"/>
<path d="M142.2 155.2Q140 153.6 138.2 155.2Q136.6 157.2 138.2 159.2Q140 160.6 142.2 159" fill="none" stroke="#9aec9a" stroke-width="1.1" stroke-dasharray="1.6 0.8"/>
<polygon points="151.00,149.20 152.18,152.18 155.37,152.38 152.90,154.42 153.70,157.52 151.00,155.80 148.30,157.52 149.10,154.42 146.63,152.38 149.82,152.18" fill="url(#gStar)" stroke="#dca92c" stroke-width="0.9" stroke-linejoin="round"/>
<path d="M165.6 153.4L170.6 158L165.6 162.6" fill="none" stroke="#dcdcdc" stroke-width="2"/>
<path d="M164.6 152.6L170.2 157.8L164.6 163" fill="none" stroke="#666" stroke-width="1.6"/>
<!-- nav tree -->
<path d="M16.5 193v33M22 205.5h4M18 225.5h6" stroke="#111" stroke-width="1" stroke-dasharray="1 1" fill="none" shape-rendering="crispEdges"/>
<path d="M11.2 180.8L10.6 177.5L20.4 177.5L20.8 180.8z" fill="#6f9fa9" stroke="#111" stroke-width="0.9" stroke-linejoin="round"/>
<path d="M7.6 184.4L11.2 180.8L20.8 180.8L17 184.4z" fill="#3f6a74" stroke="#111" stroke-width="0.9" stroke-linejoin="round"/>
<path d="M17 184.4L20.8 180.8L20.8 188.6L17 192.4z" fill="#6a9ca8" stroke="#111" stroke-width="0.9" stroke-linejoin="round"/>
<path d="M7.6 184.4L17 184.4L17 192.4L7.6 192.4z" fill="#8cbcc6" stroke="#111" stroke-width="0.9" stroke-linejoin="round"/>
<path d="M4.8 182.6L14.4 182.6L17 184.4L7.6 184.4z" fill="#9ccad2" stroke="#111" stroke-width="0.9" stroke-linejoin="round"/>
<path d="M13.2 200.8L20.2 205.2L13.2 209.6z" fill="#a6a6a6"/>
<path d="M26.6 203.2L36.4 203.2L36.4 212.4L26.6 212.4z" fill="#8cbec8" stroke="#111" stroke-width="0.9"/>
<path d="M36.4 203.2L39.8 200.2L39.8 209.4L36.4 212.4z" fill="#6aa2ae" stroke="#111" stroke-width="0.9" stroke-linejoin="round"/>
<path d="M26.6 203.2L30 200.2L39.8 200.2L36.4 203.2z" fill="#a8d4dc" stroke="#111" stroke-width="0.9" stroke-linejoin="round"/>
<path d="M31.4 203.4v9M33.2 200.4l-3.2 2.8M38 201.6v9.4" stroke="#8a0a9a" stroke-width="1.7"/>
<rect x="25.1" y="217.9" width="14.6" height="14.2" fill="#fff" stroke="#2e2e2e" stroke-width="1"/>
<rect x="25.6" y="218.4" width="13.6" height="2.2" fill="#8ea4d6"/>
<rect x="28.2" y="222" width="10" height="8.6" rx="2.2" fill="#8fca3c"/>
<text x="33.7" y="229.6" text-anchor="middle" font-family="DejaVu Sans, sans-serif" font-weight="bold" font-size="9" fill="#5c9a1e">G</text>
<rect x="24" y="226.6" width="5.4" height="6.2" fill="#fff"/>
<path d="M24.4 232.6L27.8 229" stroke="#111" stroke-width="1.1"/><path d="M28.8 227.8L25.8 228.4L28.2 230.8z" fill="#111"/>
<!-- run toolbar -->
<path d="M197.2 109.2L206 116L197.2 122.8z" fill="url(#gPlay)" stroke="#1f6a14" stroke-width="1" stroke-linejoin="round"/>
<path d="M225.2 122.8L225.2 116.8L233.6 114.6L233.6 116z" fill="#2a8a1c" stroke="#1f6e14" stroke-width="0.6" stroke-linejoin="round"/>
<path d="M222.6 111.4l2 .8M223.4 115.6l1.6-.6M226.6 108.6l.8 1.4M230.2 117.6l1.6 1.2M232.2 113.4l1.6.4M232.6 108.4l-1 1.4" stroke="#111" stroke-width="1"/>
<circle cx="231.4" cy="109.8" r="1.9" fill="#111"/>
<ellipse cx="227.6" cy="113.4" rx="4.6" ry="4" transform="rotate(-35 227.6 113.4)" fill="#e81414" stroke="#111" stroke-width="0.9"/>
<circle cx="226" cy="112.2" r="0.8" fill="#fff"/><circle cx="228.4" cy="111.6" r="0.7" fill="#fff"/><circle cx="227" cy="114.6" r="0.8" fill="#fff"/><circle cx="229.6" cy="113.8" r="0.7" fill="#fff"/><circle cx="225" cy="114.4" r="0.6" fill="#fff"/>
<path d="M249.2 114.4L255.4 118.9L249.2 123.4z" fill="#a9dc98" stroke="#8cc47c" stroke-width="0.8" stroke-linejoin="round"/>
<rect x="256.7" y="108.6" width="6.8" height="5.6" fill="#fde29c" stroke="#f0b27a" stroke-width="1"/>
<rect x="256.7" y="116.7" width="6.8" height="5.6" fill="#fde29c" stroke="#f0b27a" stroke-width="1"/>
<rect x="279.5" y="114.8" width="9.2" height="6.6" fill="#fcd878" stroke="#eaa868" stroke-width="0.9"/>
<path d="M279.2 111.2L289 111.2L289 113L284.1 117.6L279.2 113z" fill="#98da78" stroke="#84c866" stroke-width="0.5"/>
<rect x="305.5" y="110.6" width="4.2" height="10.8" fill="#fff9cc" stroke="#eaa566" stroke-width="1"/>
<rect x="312.4" y="110.6" width="4.2" height="10.8" fill="#fff9cc" stroke="#eaa566" stroke-width="1"/>
<rect x="343.6" y="110.6" width="11" height="10.8" fill="#f2a2ac" stroke="#847878" stroke-width="1"/>
<circle cx="766.9" cy="114.8" r="7" fill="#f59c9c"/>
<rect x="764" y="114" width="6" height="2" fill="#fff"/>
<path d="M772.6 114.4v6M769.6 117.5h6.2M769.8 122.5h6" stroke="#7d8494" stroke-width="2.2" stroke-linecap="round"/>
<path d="M772.6 115v4.8M770.2 117.5h5M770.4 122.5h4.8" stroke="#fdf0a4" stroke-width="1.2"/>
<rect x="792.4" y="110.4" width="4.2" height="11" fill="url(#gRedBar)" stroke="#a01616" stroke-width="0.9"/>
<rect x="799.4" y="110.4" width="4.2" height="11" fill="url(#gRedBar)" stroke="#a01616" stroke-width="0.9"/>
<path d="M838.6 112l2.4-2M842.6 111.4l1.6-1.8M844.8 113.6l2.2-.6M845 117l2 1M842 119l.8 1.8M838 118.6l-.6 1.8" stroke="#9a9a9a" stroke-width="0.9"/>
<ellipse cx="841" cy="115.2" rx="4.8" ry="3.8" transform="rotate(-30 841 115.2)" fill="#f27070" stroke="#c88" stroke-width="0.6"/>
<ellipse cx="840" cy="113.8" rx="1.8" ry="1" transform="rotate(-30 840 113.8)" fill="#fff" opacity="0.8"/>
<path d="M836.5 109.1L828 118L831.3 118.5L829.3 124.9L837.6 115.6L834.5 114.9z" fill="#f6f6a6" stroke="#9a9a8a" stroke-width="0.7" stroke-linejoin="round"/>
<rect x="861.6" y="110.5" width="11" height="11" fill="#ead6d6" stroke="#d49a9a" stroke-width="1"/>
<rect x="863.8" y="112.7" width="6.6" height="6.6" fill="#f99c9c" stroke="#e48888" stroke-width="0.8"/>
<rect x="889.2" y="109.2" width="11.6" height="11.6" rx="2.6" fill="#a3de52" stroke="#86c636" stroke-width="0.9"/>
<path d="M897.4 112.6Q894.6 110.6 892.6 112.8Q891 115.2 892.6 117.6Q894.6 119.6 897.4 117.8" fill="none" stroke="#3f6322" stroke-width="1.4"/>
<rect x="894" y="114.9" width="7.8" height="7.8" rx="0.8" fill="#e23434" stroke="#c42424" stroke-width="0.6"/>
<path d="M895.6 116.5l4.6 4.6M900.2 116.5l-4.6 4.6" stroke="#fff" stroke-width="1.6"/>
<g transform="translate(926,104.2)"><path d="M2 -0.1L12.6 -0.1L15 8.6L6 9.7z" fill="url(#gPaper)" stroke="#90a6dc" stroke-width="0.7" stroke-linejoin="round"/><path d="M0.2 13.4L4.2 9.8L17.4 8.8L22.3 12.5L9.4 17.2z" fill="#e6e6e6" stroke="#a4a4a4" stroke-width="0.6" stroke-linejoin="round"/><path d="M7.6 12.6L16.4 10.4L19.4 12L10.4 14.8z" fill="#f6f6f6" stroke="#cfcfcf" stroke-width="0.4"/><path d="M0.2 13.4L9.4 17.2L9.2 23.5L0.6 19.2z" fill="url(#gPrnL)" stroke="#9a9a9a" stroke-width="0.6" stroke-linejoin="round"/><path d="M9.4 17.2L22.3 12.5L22.4 19L9.2 23.5z" fill="#c4c4c4" stroke="#9a9a9a" stroke-width="0.6" stroke-linejoin="round"/><path d="M12 20.2L20.4 17.2L20.4 18.6L12 21.8z" fill="#2e2e2e"/><path d="M12.6 22L21 18.8L23 19.8L14.4 23.4z" fill="#ececec" stroke="#b4b4b4" stroke-width="0.3"/></g>
<!-- toolbar 2 -->
<path d="M202 149.8h3v-5M205.6 145.8h3v4" fill="none" stroke="#58708c" stroke-width="0.8"/>
<rect x="194.3" y="148.4" width="7.4" height="3.2" fill="#f06c7c" stroke="#54688a" stroke-width="0.9"/>
<rect x="200.5" y="139.7" width="4.8" height="4.8" fill="#44e244" stroke="#547a8c" stroke-width="0.9"/>
<rect x="203.6" y="143.6" width="4.8" height="4.8" fill="#44e244" stroke="#547a8c" stroke-width="0.9"/>
<rect x="206.6" y="147.7" width="4.8" height="4.8" fill="#44e244" stroke="#547a8c" stroke-width="0.9"/>
<g shape-rendering="crispEdges"><rect x="217" y="143" width="1" height="1" fill="#fff" opacity="0.8"/><rect x="219" y="143" width="1" height="1" fill="#fff" opacity="0.8"/><rect x="221" y="143" width="1" height="1" fill="#fff" opacity="0.8"/><rect x="223" y="143" width="1" height="1" fill="#fff" opacity="0.8"/><rect x="216" y="144" width="1" height="1" fill="#fff" opacity="0.8"/><rect x="224" y="144" width="1" height="1" fill="#fff" opacity="0.8"/><rect x="216" y="145" width="1" height="1" fill="#fff" opacity="0.8"/><rect x="224" y="145" width="1" height="1" fill="#fff" opacity="0.8"/><rect x="217" y="146" width="1" height="1" fill="#fff" opacity="0.8"/><rect x="223" y="146" width="1" height="1" fill="#fff" opacity="0.8"/><rect x="218" y="147" width="1" height="1" fill="#fff" opacity="0.8"/><rect x="222" y="147" width="1" height="1" fill="#fff" opacity="0.8"/><rect x="219" y="148" width="1" height="1" fill="#fff" opacity="0.8"/><rect x="221" y="148" width="1" height="1" fill="#fff" opacity="0.8"/><rect x="220" y="149" width="1" height="1" fill="#fff" opacity="0.8"/><rect x="217" y="144" width="1" height="1" fill="#000"/><rect x="219" y="144" width="1" height="1" fill="#000"/><rect x="221" y="144" width="1" height="1" fill="#000"/><rect x="223" y="144" width="1" height="1" fill="#000"/><rect x="217" y="145" width="1" height="1" fill="#000"/><rect x="218" y="145" width="1" height="1" fill="#000"/><rect x="220" y="145" width="1" height="1" fill="#000"/><rect x="222" y="145" width="1" height="1" fill="#000"/><rect x="223" y="145" width="1" height="1" fill="#000"/><rect x="218" y="146" width="1" height="1" fill="#000"/><rect x="219" y="146" width="1" height="1" fill="#000"/><rect x="221" y="146" width="1" height="1" fill="#000"/><rect x="222" y="146" width="1" height="1" fill="#000"/><rect x="219" y="147" width="1" height="1" fill="#000"/><rect x="220" y="147" width="1" height="1" fill="#000"/><rect x="221" y="147" width="1" height="1" fill="#000"/><rect x="220" y="148" width="1" height="1" fill="#000"/></g>
<rect x="241.6" y="140.6" width="4.2" height="4.8" fill="#fff" stroke="#5c7896" stroke-width="0.9"/><rect x="241.2" y="140.2" width="5" height="1.4" fill="#93a4cf"/><path d="M243.6 145.6v3.6h3.4" fill="none" stroke="#3c5872" stroke-width="1"/><path d="M247.79999999999998 140.7h4.4M248.39999999999998 143.2h3.2" stroke="#2f4f6c" stroke-width="1" fill="none"/><path d="M247.89999999999998 141.2h4.2l-2.1 2.2z M248.1 143.6h3.8l-1.9 2.4z" fill="#2f4f6c"/><rect x="247.0" y="147.4" width="5.4" height="5.2" fill="#d40000" stroke="#7c8fb8" stroke-width="0.6"/><rect x="246.8" y="147" width="5.8" height="1.3" fill="#8b9ccb"/><text x="253.2" y="151.8" font-family="DejaVu Sans, sans-serif" font-weight="bold" font-size="13.2" fill="#2e506e">?</text>
<rect x="271.4" y="140.6" width="4.2" height="4.8" fill="#fff" stroke="#5c7896" stroke-width="0.9"/><rect x="271" y="140.2" width="5" height="1.4" fill="#93a4cf"/><path d="M273.4 145.6v3.6h3.4" fill="none" stroke="#3c5872" stroke-width="1"/><path d="M277.6 140.7h4.4M278.20000000000005 143.2h3.2" stroke="#2f4f6c" stroke-width="1" fill="none"/><path d="M277.70000000000005 141.2h4.2l-2.1 2.2z M277.90000000000003 143.6h3.8l-1.9 2.4z" fill="#2f4f6c"/><rect x="276.40000000000003" y="147.2" width="5.6" height="5.3" fill="#c4c4c4" stroke="#5f86a6" stroke-width="0.9"/><rect x="276.0" y="146.8" width="6.4" height="1.3" fill="#8aa2cc"/><text x="283.0" y="151.8" font-family="DejaVu Sans, sans-serif" font-weight="bold" font-size="13.2" fill="#2e506e">?</text>
<rect x="301.4" y="140.6" width="4.2" height="4.8" fill="#fff" stroke="#5c7896" stroke-width="0.9"/><rect x="301" y="140.2" width="5" height="1.4" fill="#93a4cf"/><path d="M303.4 145.6v3.6h3.4" fill="none" stroke="#3c5872" stroke-width="1"/><path d="M307.6 140.7h4.4M308.20000000000005 143.2h3.2" stroke="#2f4f6c" stroke-width="1" fill="none"/><path d="M307.70000000000005 141.2h4.2l-2.1 2.2z M307.90000000000003 143.6h3.8l-1.9 2.4z" fill="#2f4f6c"/><circle cx="309.3" cy="150.4" r="2.5" fill="#fff" stroke="#2f4f6c" stroke-width="0.9"/><path d="M309.3 150.4l1.5-1.6" stroke="#2f4f6c" stroke-width="0.8"/><text x="313.0" y="151.8" font-family="DejaVu Sans, sans-serif" font-weight="bold" font-size="13.2" fill="#2e506e">?</text>
<rect x="345.9" y="139.6" width="10.6" height="9.6" fill="#f5f1e8" stroke="#4c4436" stroke-width="1.1"/>
<rect x="348.2" y="141.4" width="3.6" height="2.6" fill="#9a9a9a"/><rect x="351" y="145" width="4" height="2.8" fill="#9a9a9a"/>
<path d="M341.2 149.5L345.6 145.2L345.6 147.4L351.2 147.4L351.2 151.6L345.6 151.6L345.6 153.8z" fill="url(#gBlueL)" stroke="#2a5ccc" stroke-width="0.5" stroke-linejoin="round"/>
<!-- test tree -->
<path d="M190.8 169.8L200 169.8L195.4 177.6z" fill="#a3a3a3"/>
<path d="M200 173.5h4M209.5 182v12M211 193.5h7" stroke="#111" stroke-width="1" stroke-dasharray="1 1" fill="none" shape-rendering="crispEdges"/>
<rect x="203.3" y="167.3" width="11.8" height="11.8" fill="#006400"/>
<path d="M205.5 172.70000000000002L208.5 175.9L213.70000000000002 169.70000000000002" fill="none" stroke="#fff" stroke-width="2"/>
<rect x="217.2" y="187" width="11.8" height="11.8" fill="#006400"/>
<path d="M219.39999999999998 192.4L222.39999999999998 195.6L227.6 189.4" fill="none" stroke="#fff" stroke-width="2"/>
<!-- pins toolbar -->
<path d="M393.4 302.8L400.6 296.4L400.6 299.8L409.2 299.8L409.2 305.8L400.6 305.8L400.6 309.4z" fill="#bdeeb0" stroke="#86d67e" stroke-width="1" stroke-linejoin="round"/>
<g transform="translate(830.2,0) scale(-1,1)"><path d="M393.4 302.8L400.6 296.4L400.6 299.8L409.2 299.8L409.2 305.8L400.6 305.8L400.6 309.4z" fill="#bdeeb0" stroke="#86d67e" stroke-width="1" stroke-linejoin="round"/></g>
<rect x="460.5" y="294.5" width="11" height="11" fill="#fbfbfb" stroke="#3c3c3c" stroke-width="1"/>
<path d="M463.6 308.6L460.4 311.4" stroke="#f08a28" stroke-width="2" stroke-linecap="round"/>
<circle cx="470.5" cy="303" r="6.9" fill="#e2ecfc" stroke="#a4a8c4" stroke-width="1.2"/>
<rect x="466" y="300.8" width="7.2" height="2.4" rx="0.4" fill="#2a36e4"/>

</svg>
</div>
</body></html>
